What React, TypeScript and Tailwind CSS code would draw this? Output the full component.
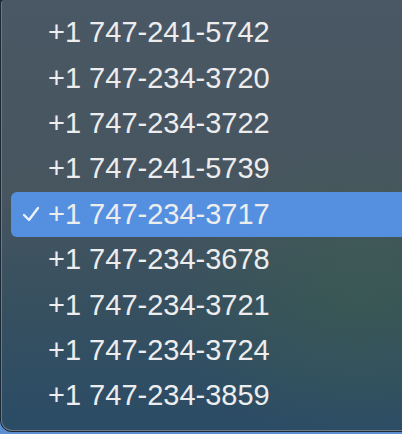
const numbers = [
  "+1 747-241-5742",
  "+1 747-234-3720",
  "+1 747-234-3722",
  "+1 747-241-5739",
  "+1 747-234-3717",
  "+1 747-234-3678",
  "+1 747-234-3721",
  "+1 747-234-3724",
  "+1 747-234-3859",
];

const selected = "+1 747-234-3717";

export default function App() {
  return (
    <div className="w-[402px] h-[434px] overflow-hidden bg-[#5b8fd2]">
      <div className="h-[432px] bg-[#1c2a35] rounded-bl-[12px] pl-[1px] pb-[1px]">
        <div
          className="h-full rounded-tl-[4px] rounded-bl-[11px] border-l border-b border-[#6d7a84] pt-[10px] bg-[radial-gradient(ellipse_at_90%_68%,rgba(62,98,72,0.45),transparent_38%),linear-gradient(180deg,#4a5865_0%,#47555f_45%,#37505f_70%,#2b4c66_100%)]"
          style={{ fontFamily: '"Liberation Sans", Arial, sans-serif' }}
        >
          {numbers.map((n) => (
            <div key={n} className="pl-[9px]">
              <div
                className={`h-[45.4px] flex items-center rounded-l-[6px] ${
                  n === selected ? "bg-[#5590e0]" : ""
                }`}
              >
                <div className="w-[37px] flex justify-center pl-[2px]">
                  {n === selected && (
                    <svg width="18" height="16" viewBox="0 0 18 16">
                      <path
                        d="M2 9 L7 14 L16 2"
                        fill="none"
                        stroke="#eef2f8"
                        strokeWidth="2.4"
                        strokeLinecap="round"
                        strokeLinejoin="round"
                      />
                    </svg>
                  )}
                </div>
                <span className="text-[29px] leading-none text-[#ededee]">
                  {n}
                </span>
              </div>
            </div>
          ))}
        </div>
      </div>
    </div>
  );
}
